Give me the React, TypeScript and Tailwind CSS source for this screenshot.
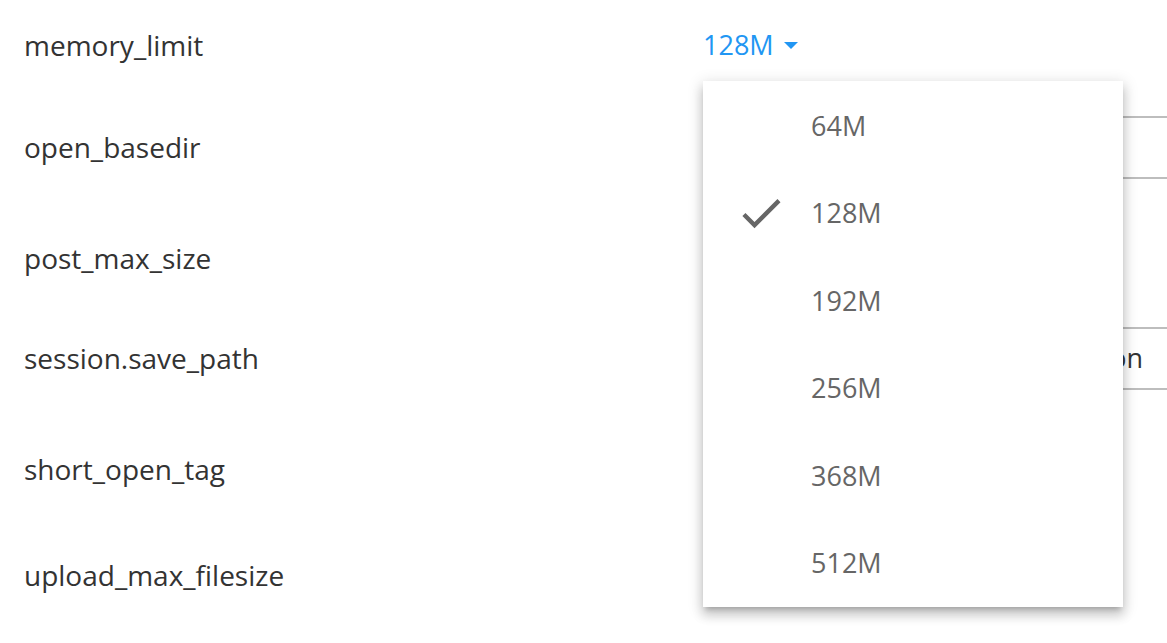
import React from "react";

const rows: { label: string; h: string; kind: "select" | "input" | "none"; value?: string }[] = [
  { label: "memory_limit", h: "h-[90px]", kind: "select", value: "128M" },
  { label: "open_basedir", h: "h-[114px]", kind: "input", value: "" },
  { label: "post_max_size", h: "h-[108px]", kind: "none" },
  { label: "session.save_path", h: "h-[92px]", kind: "input", value: "/var/lib/php/session" },
  { label: "short_open_tag", h: "h-[130px]", kind: "none" },
  { label: "upload_max_filesize", h: "h-[82px]", kind: "none" },
];

const options = ["64M", "128M", "192M", "256M", "368M", "512M"];

function Check() {
  return (
    <svg viewBox="0 0 24 24" className="w-[52px] h-[52px]" fill="#666666">
      <path d="M9 16.17L4.83 12l-1.42 1.41L9 19 21 7l-1.41-1.41z" />
    </svg>
  );
}

export default function App() {
  return (
    <div
      className="relative w-[1167px] h-[643px] overflow-hidden bg-white"
      style={{ fontFamily: '"Open Sans", "Liberation Sans", sans-serif' }}
    >
      <div className="flex flex-col">
        {rows.map((r) => (
          <div key={r.label} className={`flex items-center ${r.h}`}>
            <div className="w-[703px] pl-[24px] text-[28px] text-[#333333]">{r.label}</div>
            <div className="flex-1">
              {r.kind === "select" && (
                <div className="flex items-center gap-[10px] text-[27px] text-[#2196f3]">
                  <span>{r.value}</span>
                  <svg viewBox="0 0 10 5" className="w-[14px] h-[7px]" fill="#2196f3">
                    <path d="M0 0l5 5 5-5z" />
                  </svg>
                </div>
              )}
              {r.kind === "input" && (
                <div className="h-[63px] border-y-2 border-[#bdbdbd] flex items-center justify-end pr-[24px] text-[27px] text-[#333333]">
                  {r.value}
                </div>
              )}
            </div>
          </div>
        ))}
      </div>

      <div className="absolute left-[703px] top-[81px] w-[420px] h-[526px] bg-white py-[1px] shadow-[0_5px_5px_-3px_rgba(0,0,0,0.2),0_8px_10px_1px_rgba(0,0,0,0.14),0_3px_14px_2px_rgba(0,0,0,0.12)]">
        {options.map((o) => (
          <div key={o} className="h-[87.5px] flex items-center">
            <div className="w-[108px] flex justify-start pl-[32px]">{o === "128M" ? <Check /> : null}</div>
            <span className="text-[27px] text-[#666666]">{o}</span>
          </div>
        ))}
      </div>
    </div>
  );
}
